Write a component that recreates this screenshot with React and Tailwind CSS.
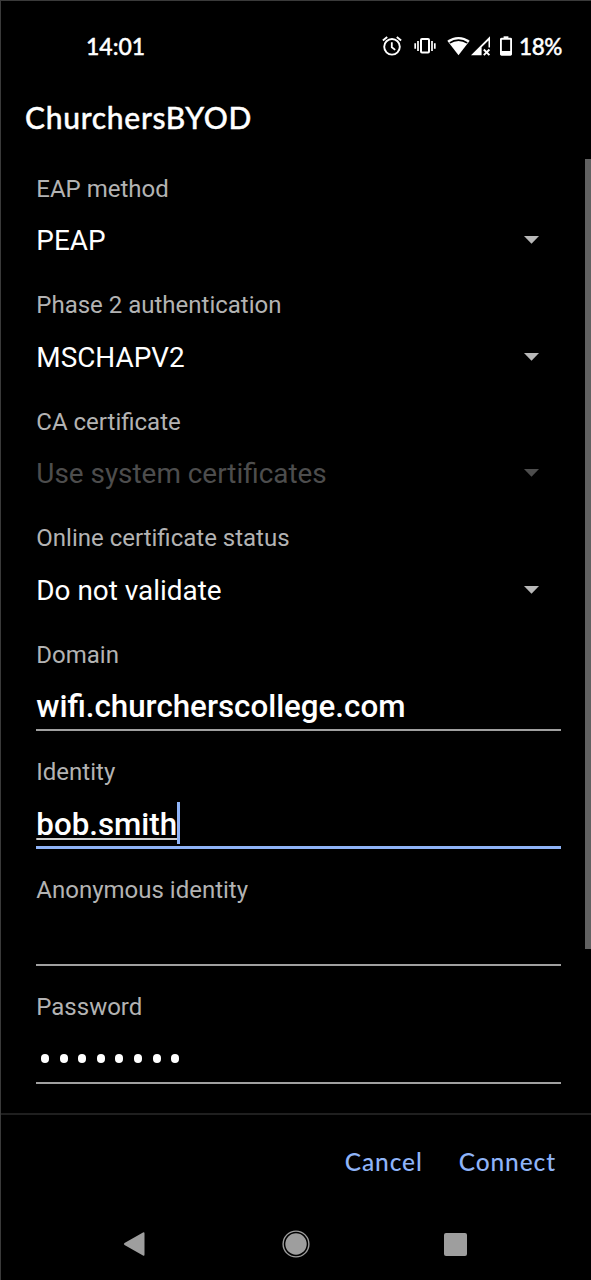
const selectFields = [
  { label: 'EAP method', value: 'PEAP' },
  { label: 'Phase 2 authentication', value: 'MSCHAPV2' },
  { label: 'CA certificate', value: 'Use system certificates', disabled: true },
  { label: 'Online certificate status', value: 'Do not validate' },
];

const FieldLabel = ({ children }) => (
  <div className="h-[35px] pl-[0.3px] leading-[36px] text-[24px] text-[#b3b3b3] whitespace-nowrap">
    {children}
  </div>
);

const SelectField = ({ label, value, disabled }) => (
  <div className="h-[116.5px]">
    <FieldLabel>{label}</FieldLabel>
    <div
      className={`flex items-center justify-between h-[70px] pl-[0.3px] pr-[22.5px] text-[27.9px] whitespace-nowrap ${
        disabled ? 'text-[#4d4d4d]' : 'text-white'
      }`}
    >
      <span className="pt-px">{value}</span>
      <svg
        className={`w-[15px] h-2 mb-px ${disabled ? 'text-[#4d4d4d]' : 'text-[#b8b8b8]'}`}
        viewBox="0 0 15 8"
      >
        <path d="M0 0h15L7.5 7.8z" fill="currentColor" />
      </svg>
    </div>
  </div>
);

const TextField = ({ label, focused, children }) => (
  <div className="h-[117.6px]">
    <FieldLabel>{label}</FieldLabel>
    <div
      className={`flex items-center h-[59.5px] pl-[0.3px] text-[31.3px] font-medium text-white ${
        focused ? 'pt-[16px] border-b-[3px] border-[#8fb4f8]' : 'pt-[14px] border-b-2 border-[#a0a0a0]'
      }`}
    >
      {children}
    </div>
  </div>
);

const StatusIcons = () => (
  <div className="flex items-center">
    {/* Alarm */}
    <svg className="w-5 h-5 mr-3" viewBox="0 0 20 20" fill="none" stroke="white">
      <circle cx="10" cy="10.8" r="7.8" strokeWidth="1.9" />
      <path d="M9.8 6.3v5l3.4 2.6" strokeWidth="1.8" />
      <path d="M.9 4.6L5.2 1M19.1 4.6L14.8 1" strokeWidth="1.9" />
    </svg>
    {/* Vibrate */}
    <svg className="w-[22px] h-5 mr-[11px]" viewBox="0 0 22 20" fill="none" stroke="white">
      <rect x="7" y="2.9" width="8" height="13.7" rx="1" strokeWidth="2" />
      <path d="M4 5v10M18 5v10M1.2 7.2v5.6M20.8 7.2v5.6" strokeWidth="1.7" />
    </svg>
    {/* Wifi */}
    <svg className="w-[23px] h-5 mr-[1px]" viewBox="0 0 23 20">
      <path d="M.3 4.8C6.8-.4 16.2-.4 22.7 4.8L11.5 19.2z" fill="white" />
      <path d="M2.8 6.9c5.2-3.8 12.2-3.8 17.4 0" fill="none" stroke="black" strokeWidth="1.7" />
    </svg>
    {/* Mobile signal */}
    <svg className="w-5 h-5 mr-[9px]" viewBox="0 0 20 20">
      <path d="M0 19.3L19 .3v11.2h-1.5V4.4L10.6 11.3v8z" fill="white" />
      <path d="M12.8 13.5l5.6 5.6M18.4 13.5l-5.6 5.6" stroke="white" strokeWidth="1.9" />
    </svg>
    {/* Battery */}
    <svg className="w-3 h-5 mr-[7px]" viewBox="0 0 12 20">
      <path d="M3.6.3h4.8v2.3H3.6z" fill="white" />
      <rect x=".9" y="2.7" width="10.2" height="16" rx=".6" fill="none" stroke="white" strokeWidth="1.9" />
      <path d="M1 15h10v4H1z" fill="white" />
    </svg>
    <span className="w-[42px] pt-px text-[22.5px] tracking-[-0.4px] font-medium whitespace-nowrap [-webkit-text-stroke:0.4px_currentColor]">
      18%
    </span>
  </div>
);

const App = () => {
  return (
    <div className="flex flex-col w-[591px] h-[1280px] overflow-hidden bg-black border-t border-l border-[#3a3a3a] font-['Roboto',sans-serif] text-white">
      {/* Status bar */}
      <div className="flex items-center justify-between h-[90px] pl-[85px] pr-[30px] font-['Lato',sans-serif]">
        <span className="text-[23px] font-medium [-webkit-text-stroke:0.4px_currentColor]">14:01</span>
        <StatusIcons />
      </div>

      {/* Dialog title */}
      <h1 className="h-[68px] pt-[7px] pl-6 leading-[38px] text-[30px] tracking-[0.7px] font-medium font-['Lato',sans-serif] [-webkit-text-stroke:0.4px_currentColor]">
        ChurchersBYOD
      </h1>

      {/* Form */}
      <div className="flex h-[954px]">
        <div className="w-[525px] ml-[35px] pt-[11.5px]">
          {selectFields.map((field) => (
            <SelectField key={field.label} {...field} />
          ))}
          <TextField label="Domain">wifi.churcherscollege.com</TextField>
          <TextField label="Identity" focused>
            <span className="underline decoration-[#d0d0d0] decoration-2 underline-offset-[3px]">bob.smith</span>
            <span className="w-[3px] h-[42px] -mt-[5px] bg-[#8fb4f8]" />
          </TextField>
          <TextField label="Anonymous identity" />
          <TextField label="Password">
            <span className="flex gap-[10.6px] pl-[4.7px] -mt-[4px]">
              {Array.from({ length: 8 }, (_, i) => (
                <span key={i} className="w-2 h-[9px] rounded-full bg-white" />
              ))}
            </span>
          </TextField>
        </div>
        <div className="w-1.5 h-[790px] ml-auto bg-[#616161]" />
      </div>

      {/* Actions */}
      <div className="flex justify-end h-[98px] gap-[36px] pr-[35px] border-t-2 border-[#1f1f1f] text-[24.5px] leading-[94px] tracking-[0.9px] font-medium text-[#8fb4f8] font-['Lato',sans-serif]">
        <button className="h-[94px]">Cancel</button>
        <button className="h-[94px]">Connect</button>
      </div>

      {/* Navigation bar */}
      <div className="flex items-center h-[66px] pl-[121.5px]">
        <svg className="w-[23px] h-[26px]" viewBox="0 0 23 26">
          <path d="M1.5 12.1L20 1.5q1.5-.8 1.5 1v21q0 1.8-1.5 1L1.5 13.9q-1.3-.9 0-1.8z" fill="#9e9e9e" />
        </svg>
        <svg className="w-7 h-7 ml-[136.5px]" viewBox="0 0 28 28">
          <circle cx="14" cy="14" r="12.9" fill="none" stroke="#9e9e9e" strokeWidth="1.4" />
          <circle cx="14" cy="14" r="10.7" fill="#9e9e9e" />
        </svg>
        <div className="w-[23px] h-[23px] ml-[134px] rounded-[2px] bg-[#9e9e9e]" />
      </div>
    </div>
  );
};

export default App;
